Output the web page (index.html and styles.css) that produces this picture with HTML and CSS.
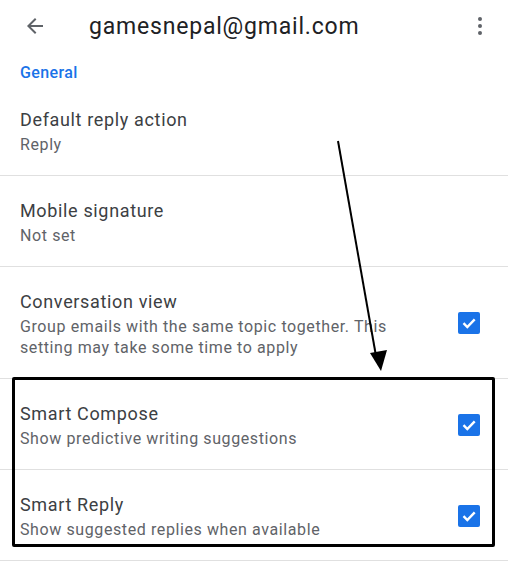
FILE: index.html
```html
<!DOCTYPE html>
<html>
<head>
<meta charset="utf-8">
<link rel="stylesheet" href="styles.css">
</head>
<body>
<div class="screen">
  <header class="appbar">
    <svg class="back" width="24" height="24" viewBox="0 0 24 24"><path d="M20 11H7.83l5.59-5.59L12 4l-8 8 8 8 1.41-1.41L7.83 13H20v-2z" fill="#5f6368"/></svg>
    <h1 class="title">gamesnepal@gmail.com</h1>
    <svg class="more" width="24" height="24" viewBox="0 0 24 24"><circle cx="12" cy="5" r="2" fill="#5f6368"/><circle cx="12" cy="12" r="2" fill="#5f6368"/><circle cx="12" cy="19" r="2" fill="#5f6368"/></svg>
  </header>
  <div class="section">General</div>
  <ul class="list">
    <li class="row">
      <div class="text">
        <div class="name">Default reply action</div>
        <div class="desc">Reply</div>
      </div>
    </li>
    <li class="row">
      <div class="text">
        <div class="name">Mobile signature</div>
        <div class="desc">Not set</div>
      </div>
    </li>
    <li class="row">
      <div class="text">
        <div class="name">Conversation view</div>
        <div class="desc">Group emails with the same topic together. This setting may take some time to apply</div>
      </div>
      <span class="check"><svg width="22" height="22" viewBox="0 0 22 22"><path d="M5.5 11.2l3.8 3.8 7.4-7.6" fill="none" stroke="#fff" stroke-width="2.4"/></svg></span>
    </li>
    <li class="row">
      <div class="text">
        <div class="name">Smart Compose</div>
        <div class="desc">Show predictive writing suggestions</div>
      </div>
      <span class="check"><svg width="22" height="22" viewBox="0 0 22 22"><path d="M5.5 11.2l3.8 3.8 7.4-7.6" fill="none" stroke="#fff" stroke-width="2.4"/></svg></span>
    </li>
    <li class="row">
      <div class="text">
        <div class="name">Smart Reply</div>
        <div class="desc">Show suggested replies when available</div>
      </div>
      <span class="check"><svg width="22" height="22" viewBox="0 0 22 22"><path d="M5.5 11.2l3.8 3.8 7.4-7.6" fill="none" stroke="#fff" stroke-width="2.4"/></svg></span>
    </li>
  </ul>
  <div class="highlight"></div>
  <svg class="arrow" width="508" height="561" viewBox="0 0 508 561">
    <line x1="338" y1="141" x2="376" y2="356" stroke="#000" stroke-width="2"/>
    <polygon points="370,353 387,350 381,371" fill="#000"/>
  </svg>
</div>
</body>
</html>
```

FILE: styles.css
```css
* { box-sizing: border-box; }
html, body { margin: 0; padding: 0; background: #fff; }
body { font-family: Roboto, "Noto Sans", sans-serif; }
.screen { position: relative; width: 508px; height: 561px; overflow: hidden; }
.appbar {
  height: 52px;
  display: flex;
  align-items: center;
  padding: 0 16px 0 23px;
}
.back { flex: none; }
.title {
  margin: 0 0 0 42px;
  flex: 1;
  font-size: 23px;
  font-weight: 400;
  color: #202124;
  letter-spacing: 0.8px;
}
.more { flex: none; }
.section {
  padding: 11px 20px 0;
  height: 33px;
  line-height: 20px;
  font-size: 16px;
  font-weight: 500;
  letter-spacing: 0.4px;
  color: #1a73e8;
}
.list { list-style: none; margin: 0; padding: 0; }
.row {
  display: flex;
  align-items: center;
  padding: 21px 28px 20px 20px;
  border-bottom: 1px solid #e0e0e0;
}
.text { flex: 1; }
.name {
  font-size: 18px;
  line-height: 28px;
  letter-spacing: 0.65px;
  color: #3c4043;
}
.desc {
  font-size: 16px;
  line-height: 21px;
  letter-spacing: 0.6px;
  color: #5f6368;
  max-width: 390px;
}
.check {
  flex: none;
  width: 22px;
  height: 22px;
  border-radius: 2px;
  background: #1a73e8;
  display: block;
}
.check svg { display: block; }
.highlight {
  position: absolute;
  left: 12px;
  top: 377px;
  width: 483px;
  height: 170px;
  border: 3px solid #000;
  border-radius: 2px;
}
.arrow { position: absolute; left: 0; top: 0; pointer-events: none; }
```
